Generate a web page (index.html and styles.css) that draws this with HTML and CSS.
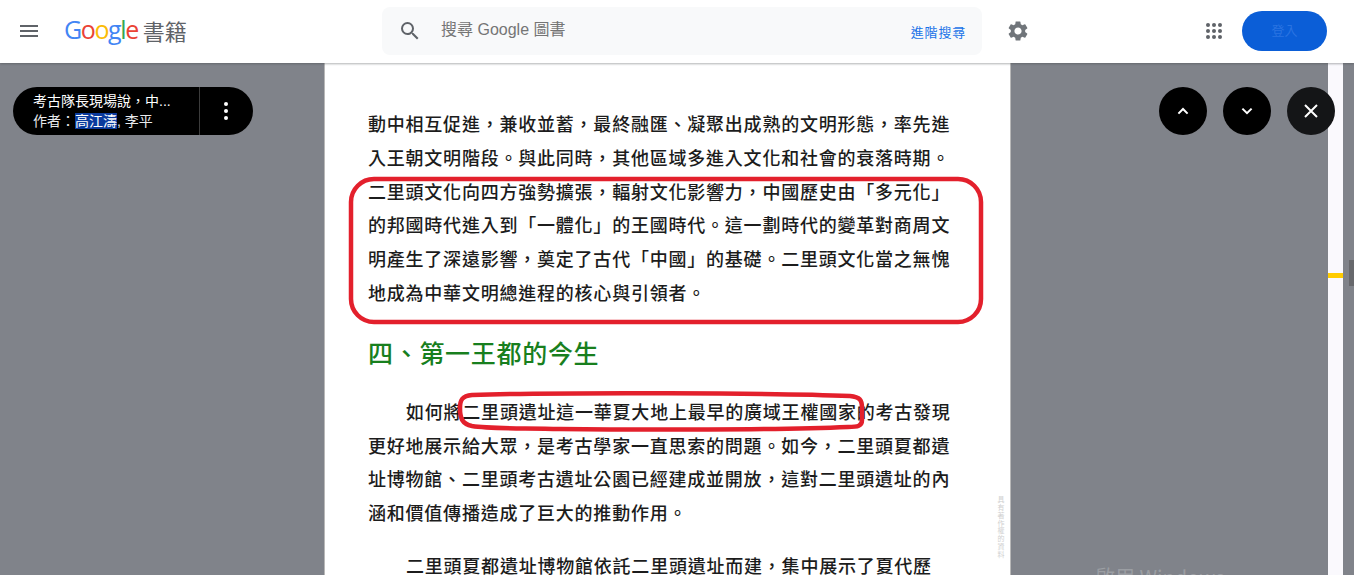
FILE: index.html
```html
<!DOCTYPE html>
<html lang="zh-TW">
<head>
    <meta charset="UTF-8">
    <meta name="viewport" content="width=device-width, initial-scale=1.0">
    <title>考古隊長現場說 - Google 圖書</title>
    <link rel="stylesheet" href="styles.css">
</head>
<body>

    <header class="topbar">
        <svg class="menu-icon" width="24" height="24" viewBox="0 0 24 24"><path d="M3 18h18v-2H3v2zm0-5h18v-2H3v2zm0-7v2h18V6H3z"/></svg>
        <div class="logo">
            <span class="logo-word"><span class="g-blue">G</span><span class="g-red">o</span><span class="g-yellow">o</span><span class="g-blue">g</span><span class="g-green">l</span><span class="g-red">e</span></span>
            <span class="logo-books">書籍</span>
        </div>
        <div class="search">
            <svg class="search-icon" width="24" height="24" viewBox="0 0 24 24"><path d="M15.5 14h-.79l-.28-.27A6.471 6.471 0 0 0 16 9.5 6.5 6.5 0 1 0 9.5 16c1.61 0 3.09-.59 4.23-1.57l.27.28v.79l5 4.99L20.49 19l-4.99-5zm-6 0C7.01 14 5 11.99 5 9.5S7.01 5 9.5 5 14 7.01 14 9.5 11.99 14 9.5 14z"/></svg>
            <span class="search-text">搜尋 Google 圖書</span>
            <a class="search-adv">進階搜尋</a>
        </div>
        <svg class="gear-icon" width="24" height="24" viewBox="0 0 24 24"><path d="M19.14 12.94c.04-.3.06-.61.06-.94 0-.32-.02-.64-.07-.94l2.03-1.58a.49.49 0 0 0 .12-.61l-1.92-3.32a.488.488 0 0 0-.59-.22l-2.39.96c-.5-.38-1.03-.7-1.62-.94l-.36-2.54a.484.484 0 0 0-.48-.41h-3.84c-.24 0-.43.17-.47.41l-.36 2.54c-.59.24-1.13.57-1.62.94l-2.39-.96c-.22-.08-.47 0-.59.22L2.74 8.87c-.12.21-.08.47.12.61l2.03 1.58c-.05.3-.09.63-.09.94s.02.64.07.94l-2.03 1.58a.49.49 0 0 0-.12.61l1.92 3.32c.12.22.37.29.59.22l2.39-.96c.5.38 1.03.7 1.62.94l.36 2.54c.05.24.24.41.48.41h3.84c.24 0 .44-.17.47-.41l.36-2.54c.59-.24 1.13-.56 1.62-.94l2.39.96c.22.08.47 0 .59-.22l1.92-3.32c.12-.22.07-.47-.12-.61l-2.01-1.58zM12 15.6c-1.98 0-3.6-1.62-3.6-3.6s1.62-3.6 3.6-3.6 3.6 1.62 3.6 3.6-1.62 3.6-3.6 3.6z"/></svg>
        <svg class="apps-icon" width="16" height="16" viewBox="0 0 16 16">
            <circle cx="2" cy="2" r="2"/><circle cx="8" cy="2" r="2"/><circle cx="14" cy="2" r="2"/>
            <circle cx="2" cy="8" r="2"/><circle cx="8" cy="8" r="2"/><circle cx="14" cy="8" r="2"/>
            <circle cx="2" cy="14" r="2"/><circle cx="8" cy="14" r="2"/><circle cx="14" cy="14" r="2"/>
        </svg>
        <button class="login">登入</button>
    </header>

    <main class="viewer">
        <article class="page">
            <p class="line">動中相互促進，兼收並蓄，最終融匯、凝聚出成熟的文明形態，率先進</p>
            <p class="line">入王朝文明階段。與此同時，其他區域多進入文化和社會的衰落時期。</p>
            <p class="line">二里頭文化向四方強勢擴張，輻射文化影響力，中國歷史由「多元化」</p>
            <p class="line">的邦國時代進入到「一體化」的王國時代。這一劃時代的變革對商周文</p>
            <p class="line">明產生了深遠影響，奠定了古代「中國」的基礎。二里頭文化當之無愧</p>
            <p class="line">地成為中華文明總進程的核心與引領者。</p>

            <h2 class="chapter">四、第一王都的今生</h2>

            <p class="line indent">如何將二里頭遺址這一華夏大地上最早的廣域王權國家的考古發現</p>
            <p class="line">更好地展示給大眾，是考古學家一直思索的問題。如今，二里頭夏都遺</p>
            <p class="line">址博物館、二里頭考古遺址公園已經建成並開放，這對二里頭遺址的內</p>
            <p class="line">涵和價值傳播造成了巨大的推動作用。</p>

            <p class="line indent last-para">二里頭夏都遺址博物館依託二里頭遺址而建，集中展示了夏代歷</p>

            <span class="copyright">具有著作權的資料</span>
        </article>
        <div class="strip"></div>
    </main>

    <div class="book-pill">
        <div class="book-info">
            <div class="book-title">考古隊長現場說，中...</div>
            <div class="book-author">作者：<span class="selected">高江濤</span>, 李平</div>
        </div>
        <div class="book-more"><i></i><i></i><i></i></div>
    </div>

    <div class="float-btns">
        <button class="round-btn">
            <svg width="24" height="24" viewBox="0 0 24 24"><path d="M7.4 14.6 12 10l4.6 4.6" /></svg>
        </button>
        <button class="round-btn">
            <svg width="24" height="24" viewBox="0 0 24 24"><path d="M7.4 9.6 12 14.2l4.6-4.6" /></svg>
        </button>
        <button class="round-btn close-btn">
            <svg width="24" height="24" viewBox="0 0 24 24"><path d="M6 6l12 12M18 6 6 18" /></svg>
        </button>
    </div>

    <svg class="marks" width="1354" height="575" viewBox="0 0 1354 575">
        <rect x="351" y="179" width="630" height="143" rx="23"/>
        <path d="M472 395C560 392 780 393 850 396C860 397 862 400 862 408L862 420C862 426 858 427 848 427C780 430 640 430 560 429C520 428 490 429 472 426C462 424 460 418 460 408C460 400 462 396 472 395Z"/>
    </svg>

    <div class="scroll-mark"></div>
    <div class="scroll-thumb"></div>
    <div class="watermark">啟用 Windows</div>

</body>
</html>
```

FILE: styles.css
```css
* {
    box-sizing: border-box;
}

html, body {
    height: 100%;
}

body {
    margin: 0;
    overflow: hidden;
    display: flex;
    flex-direction: column;
    background-color: #80838a;
    font-family: "Noto Sans CJK TC", Roboto, "Liberation Sans", sans-serif;
}

.topbar {
    height: 63px;
    padding-bottom: 1px;
    flex-shrink: 0;
    display: flex;
    align-items: center;
    background-color: #fff;
    box-shadow: 0 1px 2px rgba(60, 64, 67, .4);
    position: relative;
    z-index: 2;
}

.menu-icon {
    margin-left: 17px;
    fill: #5f6368;
}

.logo {
    margin-left: 23px;
    width: 318px;
    padding-bottom: 3px;
    display: flex;
    align-items: center;
    gap: 5px;
    line-height: 1;
}

.logo-word {
    font-family: "Open Sans", sans-serif;
    font-size: 25px;
    font-weight: 500;
    letter-spacing: -1.4px;
}

.g-blue { color: #4285f4; }
.g-red { color: #ea4335; }
.g-yellow { color: #fbbc05; }
.g-green { color: #34a853; }

.logo-books {
    font-size: 22px;
    color: #5f6368;
}

.search {
    width: 600px;
    height: 48px;
    display: flex;
    align-items: center;
    padding: 0 16px 0 16px;
    background-color: #f8f9fa;
    border-radius: 8px;
}

.search-icon {
    fill: #5f6368;
}

.search-text {
    margin-left: 19px;
    padding-bottom: 2px;
    font-family: "Liberation Sans", "Noto Sans CJK TC", sans-serif;
    font-size: 16px;
    line-height: 1;
    color: #757575;
}

.search-adv {
    margin-left: auto;
    font-size: 13px;
    line-height: 1;
    letter-spacing: .8px;
    color: #1a73e8;
}

.gear-icon {
    margin-left: 24px;
    fill: #70757a;
}

.apps-icon {
    margin-left: 176px;
    fill: #5f6368;
}

.login {
    width: 85px;
    height: 40px;
    margin-left: 20px;
    padding: 0 0 3px;
    border: none;
    border-radius: 20px;
    background-color: #0b5ed7;
    color: #2a74e2;
    font-family: inherit;
    font-size: 13px;
}

.viewer {
    flex: 1;
    min-height: 0;
    display: flex;
    padding-left: 324px;
}

.page {
    width: 687px;
    height: 100%;
    padding: 44px 0 0 43px;
    background-color: #fff;
    border-left: 1px solid #b8b8b8;
    border-right: 1px solid #b8b8b8;
    position: relative;
    overflow: hidden;
}

.line {
    margin: 0;
    height: 33.8px;
    line-height: 33.8px;
    font-size: 18px;
    font-weight: 500;
    letter-spacing: .78px;
    white-space: nowrap;
    color: #1c1c1c;
}

.indent {
    padding-left: 38px;
}

.last-para {
    margin-top: 19px;
}

.chapter {
    margin: 22px 0 23px;
    height: 40px;
    line-height: 40px;
    font-size: 25px;
    font-weight: 500;
    letter-spacing: .7px;
    color: #187f1e;
}

.copyright {
    position: absolute;
    left: 671px;
    top: 433px;
    writing-mode: vertical-rl;
    font-size: 7px;
    letter-spacing: .8px;
    color: #d0d0d0;
}

.strip {
    width: 15px;
    margin-left: 317px;
    background-color: #faf9fd;
}

.book-pill {
    position: absolute;
    left: 13px;
    top: 87px;
    width: 240px;
    height: 48px;
    display: flex;
    border-radius: 24px;
    background-color: #000;
    color: #fff;
}

.book-info {
    width: 187px;
    padding: 4px 0 0 20px;
    border-right: 1px solid #3c3c3c;
    font-family: "Liberation Sans", "Noto Sans CJK TC", sans-serif;
    font-size: 14px;
    line-height: 20px;
}

.book-author {
    color: #e8eaed;
}

.selected {
    background-color: #0a3a9c;
    color: #fff;
}

.book-more {
    flex: 1;
    display: flex;
    flex-direction: column;
    align-items: center;
    justify-content: center;
    gap: 3px;
    padding-right: 1px;
}

.book-more i {
    width: 4px;
    height: 4px;
    border-radius: 50%;
    background-color: #fff;
}

.float-btns {
    position: absolute;
    top: 87px;
    left: 1159px;
    display: flex;
    gap: 16px;
}

.round-btn {
    width: 48px;
    height: 48px;
    padding: 0;
    display: flex;
    align-items: center;
    justify-content: center;
    border: none;
    border-radius: 50%;
    background-color: #000;
}

.round-btn svg {
    fill: none;
    stroke: #fff;
    stroke-width: 2;
}

.close-btn {
    background-color: #141517;
}

.marks {
    position: absolute;
    left: 0;
    top: 0;
    pointer-events: none;
    z-index: 1;
}

.marks rect, .marks path {
    fill: none;
    stroke: #e3202c;
    stroke-width: 4.5;
}

.scroll-mark {
    position: absolute;
    left: 1328px;
    top: 273px;
    width: 15px;
    height: 5px;
    background-color: #fc0;
}

.scroll-thumb {
    position: absolute;
    left: 1349px;
    top: 260px;
    width: 5px;
    height: 26px;
    background-color: #67686c;
}

.watermark {
    position: absolute;
    left: 1095px;
    top: 562px;
    font-family: "Noto Sans CJK TC", Roboto, sans-serif;
    font-size: 20px;
    color: rgba(255, 255, 255, .22);
    white-space: nowrap;
}
```
